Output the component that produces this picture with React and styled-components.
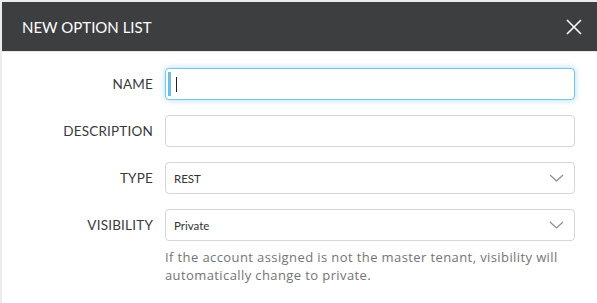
import React from 'react'
import styled, { createGlobalStyle } from 'styled-components'

const GlobalStyle = createGlobalStyle`
  html, body {
    margin: 0;
    padding: 0;
    background: #ececec;
  }
  body {
    font-family: Lato, 'Open Sans', sans-serif;
  }
`

const Modal = styled.div`
  margin: 2px 0 0 2px;
  background: #fff;
  height: 301px;
  overflow: hidden;
`

const Header = styled.div`
  height: 49px;
  background: #3d3e40;
  border-bottom: 1px solid #e6e6e6;
  display: flex;
  align-items: center;
  justify-content: space-between;
  padding: 0 14px 0 20px;
  color: #fff;
  h2 {
    margin: 0;
    font-size: 15px;
    font-weight: 400;
    letter-spacing: 0;
  }
`

const CloseButton = styled.button`
  background: none;
  border: none;
  padding: 0;
  width: 18px;
  height: 18px;
  display: flex;
  align-items: center;
  justify-content: center;
  cursor: pointer;
`

const Body = styled.div`
  padding: 16px 22px 0 0;
  display: flex;
  flex-direction: column;
  gap: 15px;
`

const Row = styled.div`
  display: grid;
  grid-template-columns: 151px 1fr;
  column-gap: 12px;
  align-items: center;
`

const Label = styled.label`
  text-align: right;
  font-size: 13.5px;
  color: #3a3a3a;
  letter-spacing: 0.2px;
`

const Field = styled.div`
  position: relative;
  height: 32px;
  box-sizing: border-box;
  border: 1px solid ${(p) => (p.$focused ? '#77c6e6' : '#d6d6d6')};
  border-radius: 4px;
  box-shadow: ${(p) => (p.$focused ? '0 0 6px rgba(102, 190, 230, 0.55)' : 'none')};
  display: flex;
  align-items: center;
  padding: 0 8px;
  font-size: 11.5px;
  color: #333;
  background: #fff;
`

const FocusBar = styled.span`
  position: absolute;
  left: 2px;
  top: 3px;
  bottom: 3px;
  width: 3px;
  background: #6dc0e2;
`

const Caret = styled.span`
  position: absolute;
  left: 10px;
  top: 8px;
  width: 1px;
  height: 15px;
  background: #222;
`

const Chevron = styled.svg`
  margin-left: auto;
  margin-right: 2px;
`

const Help = styled.p`
  margin: 0;
  grid-column: 2;
  font-family: 'Open Sans', Lato, sans-serif;
  font-size: 13px;
  letter-spacing: 0.4px;
  line-height: 18px;
  color: #747474;
  padding-top: 7px;
`

const SelectField = ({ value }) => (
  <Field>
    <span>{value}</span>
    <Chevron width='15' height='8' viewBox='0 0 15 8'>
      <path d='M1 1 L7.5 7 L14 1' fill='none' stroke='#8a8a8a' strokeWidth='1.1' />
    </Chevron>
  </Field>
)

const App = () => {
  return (
    <>
      <GlobalStyle />
      <Modal>
        <Header>
          <h2>NEW OPTION LIST</h2>
          <CloseButton aria-label='close'>
            <svg width='16' height='16' viewBox='0 0 16 16'>
              <path d='M1 1 L15 15 M15 1 L1 15' stroke='#fff' strokeWidth='1.6' />
            </svg>
          </CloseButton>
        </Header>
        <Body>
          <Row>
            <Label>NAME</Label>
            <Field $focused>
              <FocusBar />
              <Caret />
            </Field>
          </Row>
          <Row>
            <Label>DESCRIPTION</Label>
            <Field />
          </Row>
          <Row>
            <Label>TYPE</Label>
            <SelectField value='REST' />
          </Row>
          <Row>
            <Label>VISIBILITY</Label>
            <SelectField value='Private' />
            <Help>
              If the account assigned is not the master tenant, visibility will
              automatically change to private.
            </Help>
          </Row>
        </Body>
      </Modal>
    </>
  )
}

export default App
